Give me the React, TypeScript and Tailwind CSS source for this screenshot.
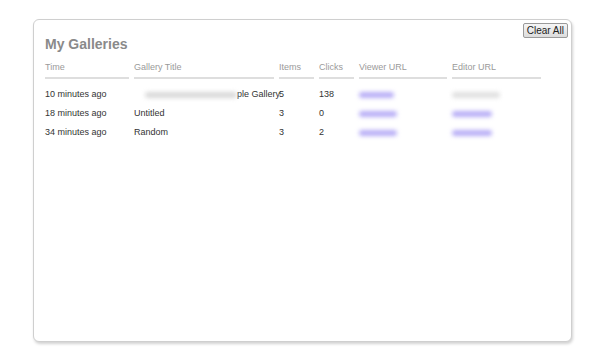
const rows = [
  { time: '10 minutes ago', title: 'first', items: '5', clicks: '138', viewer: 'w-[35px]', editor: 'w-[48px]', editorGray: true },
  { time: '18 minutes ago', title: 'Untitled', items: '3', clicks: '0', viewer: 'w-[38px]', editor: 'w-[40px]', editorGray: false },
  { time: '34 minutes ago', title: 'Random', items: '3', clicks: '2', viewer: 'w-[38px]', editor: 'w-[40px]', editorGray: false },
]

const headers = ['Time', 'Gallery Title', 'Items', 'Clicks', 'Viewer URL', 'Editor URL']

function Blur({ w, gray }: { w: string; gray?: boolean }) {
  return (
    <span
      className={`inline-block h-[6px] align-middle rounded-full blur-[2px] ${w} ${gray ? 'bg-[#e0e0e0]' : 'bg-[#b8aef6]'}`}
    />
  )
}

export default function App() {
  return (
    <div className="w-[600px] h-[359px] bg-white pt-[19px] pl-[33px] font-['Liberation_Sans',Arial,sans-serif]">
      <div className="relative w-[539px] h-[323px] border border-[#cfcfcf] rounded-[6px] bg-white shadow-[1px_2px_3px_rgba(0,0,0,0.18)] pl-[11px] pt-[15px]">
        <button className="absolute right-[3px] top-[3px] h-[15px] px-[3px] text-[10px] leading-[13px] text-[#222] border border-[#9a9a9a] rounded-[2px] bg-gradient-to-b from-[#f6f6f6] to-[#dcdcdc]">
          Clear All
        </button>
        <h1 className="text-[14px] leading-[18px] font-bold text-[#8a8a8a]">My Galleries</h1>
        <div className="grid grid-cols-[84px_140px_35px_35px_88px_89px] gap-x-[5px] mt-[9px] text-[9px]">
          {headers.map((h) => (
            <div key={h} className="text-[#9a9a9a] leading-[11px] pb-[4px] border-b-2 border-[#dedede]">
              {h}
            </div>
          ))}
          {rows.map((r, i) => (
            <div key={i} className="contents">
              <div className={`leading-[19px] text-[#333] ${i === 0 ? 'pt-[6px]' : ''}`}>{r.time}</div>
              <div className={`leading-[19px] text-[#333] whitespace-nowrap ${i === 0 ? 'pt-[6px]' : ''}`}>
                {r.title === 'first' ? (
                  <>
                    <span className="inline-block ml-[11px] w-[92px] h-[6px] align-middle rounded-full bg-[#d9d9d9] blur-[2px]" />
                    <span>ple Gallery</span>
                  </>
                ) : (
                  r.title
                )}
              </div>
              <div className={`leading-[19px] text-[#333] ${i === 0 ? 'pt-[6px]' : ''}`}>{r.items}</div>
              <div className={`leading-[19px] text-[#333] ${i === 0 ? 'pt-[6px]' : ''}`}>{r.clicks}</div>
              <div className={`leading-[19px] ${i === 0 ? 'pt-[6px]' : ''}`}>
                <Blur w={r.viewer} />
              </div>
              <div className={`leading-[19px] ${i === 0 ? 'pt-[6px]' : ''}`}>
                <Blur w={r.editor} gray={r.editorGray} />
              </div>
            </div>
          ))}
        </div>
      </div>
    </div>
  )
}
